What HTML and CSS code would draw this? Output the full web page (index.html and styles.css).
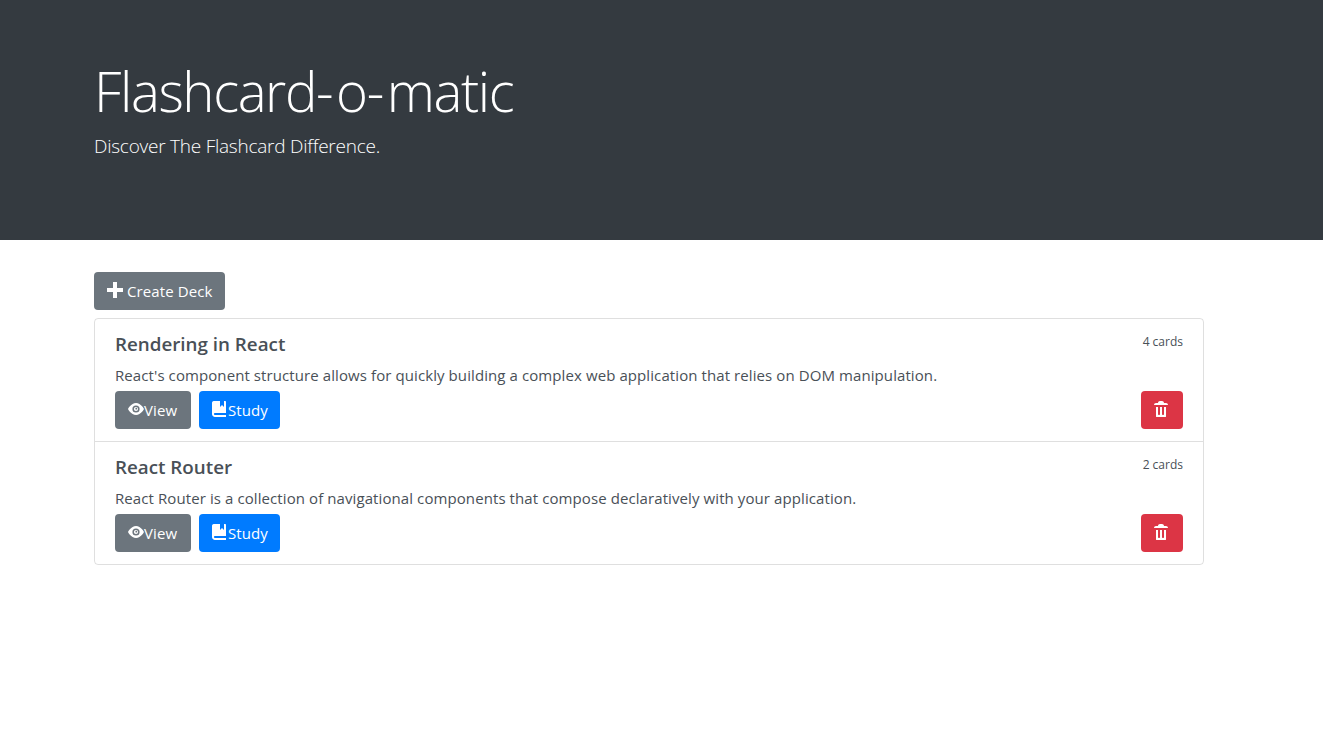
FILE: index.html
```html
<!DOCTYPE html>
<html lang="en">
<head>
<meta charset="utf-8">
<title>Flashcard-o-matic</title>
<link rel="stylesheet" href="styles.css">
</head>
<body>
<svg class="sprite" aria-hidden="true">
  <symbol id="plus" viewBox="0 0 8 8"><path d="M3 0v3h-3v2h3v3h2v-3h3v-2h-3v-3h-2z"/></symbol>
  <symbol id="eye" viewBox="0 0 8 8"><path fill-rule="evenodd" d="M4.03 1C1.5 1 0 4 0 4s1.500 3 4.030 3C6.500 7 8 4 8 4S6.500 1 4.030 1zM4 2.200a1.800 1.800 0 1 1 0 3.600a1.800 1.800 0 1 1 0-3.600zM4 2.950a1.050 1.050 0 1 0 0 2.100a1.050 1.050 0 1 0 0-2.100zM4.150 3.400a.45 .45 0 1 1 0 .9a.45 .45 0 1 1 0-.9z"/></symbol>
  <symbol id="book" viewBox="0 0 8 8"><path d="M1 0c-.07 0-.13.01-.19.03-.39.08-.7.39-.78.78-.03.06-.03.12-.03.19v5.5c0 .83.67 1.5 1.5 1.5h5.5v-1h-5.5c-.28 0-.5-.22-.5-.5s.22-.5.5-.5h5.5v-5.5c0-.28-.22-.5-.5-.5h-.5v3l-1-1-1 1v-3h-3z"/></symbol>
  <symbol id="trash" viewBox="0 0 8 8"><path d="M3 0c-.55 0-1 .45-1 1h-1c-.55 0-1 .45-1 1h7c0-.55-.45-1-1-1h-1c0-.55-.45-1-1-1h-1zm-2 3v4.81c0 .11.08.19.19.19h4.63c.11 0 .19-.08.19-.19v-4.81h-1v3.5c0 .28-.22.5-.5.5s-.5-.22-.5-.5v-3.5h-1v3.5c0 .28-.22.5-.5.5s-.5-.22-.5-.5v-3.5h-1z"/></symbol>
</svg>
<header class="hero">
  <h1 class="hero-title">Flashcard<span class="dash">-</span>o<span class="dash">-</span>matic</h1>
  <p class="hero-lead">Discover The Flashcard Difference.</p>
</header>
<main class="container">
  <a class="btn btn-secondary btn-create"><svg class="icon"><use href="#plus"/></svg><span>Create Deck</span></a>
  <div class="deck-list">
    <article class="deck">
      <div class="deck-head"><h5 class="deck-name">Rendering in React</h5><small class="deck-count">4 cards</small></div>
      <p class="deck-text">React's component structure allows for quickly building a complex web application that relies on DOM manipulation.</p>
      <div class="deck-actions">
        <a class="btn btn-secondary btn-view"><svg class="icon"><use href="#eye"/></svg><span>View</span></a>
        <a class="btn btn-primary btn-study"><svg class="icon"><use href="#book"/></svg><span>Study</span></a>
        <button class="btn btn-danger" aria-label="Delete"><svg class="icon"><use href="#trash"/></svg></button>
      </div>
    </article>
    <article class="deck">
      <div class="deck-head"><h5 class="deck-name">React Router</h5><small class="deck-count">2 cards</small></div>
      <p class="deck-text">React Router is a collection of navigational components that compose declaratively with your application.</p>
      <div class="deck-actions">
        <a class="btn btn-secondary btn-view"><svg class="icon"><use href="#eye"/></svg><span>View</span></a>
        <a class="btn btn-primary btn-study"><svg class="icon"><use href="#book"/></svg><span>Study</span></a>
        <button class="btn btn-danger" aria-label="Delete"><svg class="icon"><use href="#trash"/></svg></button>
      </div>
    </article>
  </div>
</main>
</body>
</html>
```
FILE: styles.css
```css
* { box-sizing: border-box; }
body {
  margin: 0;
  background: #fff;
  color: #212529;
  font-family: "Segoe UI", "Open Sans", "Noto Sans", sans-serif;
  font-size: 15px;
  line-height: 24px;
}
h1, h5, p { margin: 0; }
.sprite { display: none; }
.hero {
  height: 240px;
  padding: 58px 94px 0;
  background: #343a40;
  color: #fff;
}
.hero-title {
  margin-bottom: 6px;
  font-size: 54.5px;
  font-weight: 300;
  line-height: 67px;
  letter-spacing: -1.4px;
  white-space: nowrap;
}
.dash { letter-spacing: 2.6px; }
.hero-lead {
  font-size: 19px;
  font-weight: 300;
  line-height: 30px;
  letter-spacing: -.24px;
  white-space: nowrap;
}
.container {
  width: 1110px;
  margin-left: 94px;
  padding-top: 32px;
}
.btn {
  display: inline-flex;
  align-items: flex-start;
  height: 38px;
  padding: 6px 12px;
  border: 1px solid transparent;
  border-radius: 4px;
  color: #fff;
  font: inherit;
  letter-spacing: .1px;
  white-space: nowrap;
}
.btn-secondary { background: #6c757d; }
.btn-primary { background: #007bff; }
.btn-danger { width: 42px; margin-left: auto; background: #dc3545; }
.btn-create { width: 131px; gap: 4px; }
.btn-view { width: 76px; }
.btn-study { width: 81px; }
.icon {
  flex: none;
  width: 16px;
  height: 16px;
  margin-top: 3px;
  fill: currentColor;
}
.deck-list {
  margin-top: 8px;
  border: 1px solid rgba(0, 0, 0, .125);
  border-radius: 4px;
}
.deck { padding: 12px 20px; color: #495057; }
.deck + .deck { border-top: 1px solid rgba(0, 0, 0, .125); }
.deck-head {
  display: flex;
  justify-content: space-between;
  height: 24px;
  margin-bottom: 8px;
}
.deck-name { font-size: 18.8px; font-weight: 600; line-height: 26px; }
.deck-count { font-size: 12px; line-height: 22px; }
.deck-text {
  margin-bottom: 4px;
  letter-spacing: .09px;
  white-space: nowrap;
}
.deck-actions { display: flex; gap: 8px; }
```
